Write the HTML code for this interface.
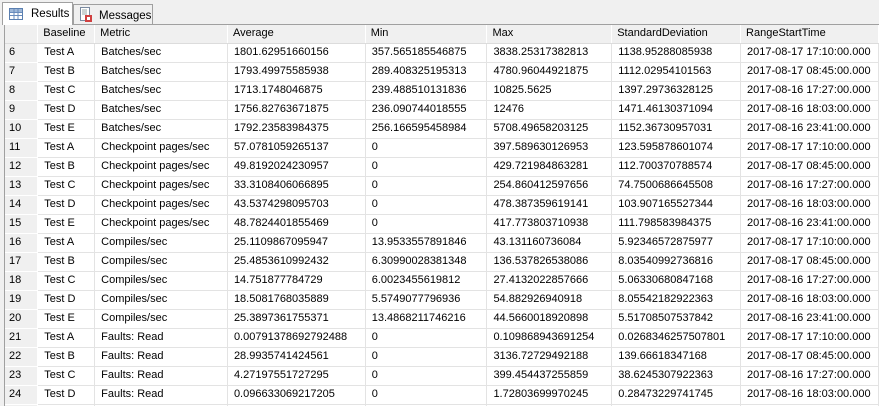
<!DOCTYPE html>
<html style="width:879px;height:406px;overflow:hidden"><head><meta charset="utf-8"><style>
*{margin:0;padding:0;box-sizing:border-box}
body{width:879px;height:406px;overflow:hidden;background:#f0f0f0;font-family:"Liberation Sans",sans-serif;font-size:11px;color:#000;position:relative}
.tab{position:absolute;border:1px solid #a0a0a0;border-bottom:none;font-size:11.5px}
#t1{left:2px;top:2px;width:71px;height:23px;background:#fff;z-index:2}
#t2{left:73px;top:4px;width:80px;height:20px;background:#f0f0f0}
.tab span{position:absolute;top:5px}
#grid{position:absolute;left:4px;top:24px;width:875px;height:382px;overflow:hidden;background:#fff;border-left:1px solid #a0a0a0;border-top:1px solid #a0a0a0}
table{border-collapse:collapse;table-layout:fixed;position:absolute;left:0;top:0}
td{height:19px;border-right:1px solid #e3e3e3;border-bottom:1px solid #e3e3e3;padding:0 0 0 6px;white-space:nowrap;overflow:hidden;line-height:17px}
tr.h td{height:18px;background:#f0f0f0;border-right:1px solid #fff;border-bottom:1px solid #dcdcdc;padding-left:5px}
td.n{background:#f0f0f0;border-right:1px solid #fff;border-bottom:1px solid #fff;padding-left:4px}
</style></head><body>
<div class="tab" id="t1">
<svg style="position:absolute;left:6px;top:5px" width="14" height="12"><rect x=".5" y=".5" width="13" height="11" fill="#fff" stroke="#5a7fb0"/><rect x="1" y="1" width="12" height="3" fill="#9fb8d8"/><path d="M1 4.5h12M1 7.5h12M5 1v10M9 1v10" stroke="#6a8cbc"/></svg>
<span style="left:28px">Results</span></div>
<div class="tab" id="t2">
<svg style="position:absolute;left:5px;top:2px" width="14" height="16"><rect x="1.5" y=".5" width="9" height="13" fill="#fff" stroke="#7a8aa0"/><path d="M3 3h5M3 5h5M3 7h5" stroke="#9aa"/><rect x="6" y="8" width="7" height="7" fill="#d04040"/><rect x="8" y="10" width="3" height="3" fill="#fff"/></svg>
<span style="left:25px">Messages</span></div>
<div id="grid"><table>
<colgroup><col style="width:33px"><col style="width:57px"><col style="width:133px"><col style="width:138px"><col style="width:122px"><col style="width:125px"><col style="width:129px"><col style="width:138px"></colgroup>
<tr class="h"><td></td><td>Baseline</td><td>Metric</td><td>Average</td><td>Min</td><td>Max</td><td>StandardDeviation</td><td>RangeStartTime</td></tr>
<tr><td class="n">6</td><td>Test A</td><td>Batches/sec</td><td>1801.62951660156</td><td>357.565185546875</td><td>3838.25317382813</td><td>1138.95288085938</td><td>2017-08-17 17:10:00.000</td></tr>
<tr><td class="n">7</td><td>Test B</td><td>Batches/sec</td><td>1793.49975585938</td><td>289.408325195313</td><td>4780.96044921875</td><td>1112.02954101563</td><td>2017-08-17 08:45:00.000</td></tr>
<tr><td class="n">8</td><td>Test C</td><td>Batches/sec</td><td>1713.1748046875</td><td>239.488510131836</td><td>10825.5625</td><td>1397.29736328125</td><td>2017-08-16 17:27:00.000</td></tr>
<tr><td class="n">9</td><td>Test D</td><td>Batches/sec</td><td>1756.82763671875</td><td>236.090744018555</td><td>12476</td><td>1471.46130371094</td><td>2017-08-16 18:03:00.000</td></tr>
<tr><td class="n">10</td><td>Test E</td><td>Batches/sec</td><td>1792.23583984375</td><td>256.166595458984</td><td>5708.49658203125</td><td>1152.36730957031</td><td>2017-08-16 23:41:00.000</td></tr>
<tr><td class="n">11</td><td>Test A</td><td>Checkpoint pages/sec</td><td>57.0781059265137</td><td>0</td><td>397.589630126953</td><td>123.595878601074</td><td>2017-08-17 17:10:00.000</td></tr>
<tr><td class="n">12</td><td>Test B</td><td>Checkpoint pages/sec</td><td>49.8192024230957</td><td>0</td><td>429.721984863281</td><td>112.700370788574</td><td>2017-08-17 08:45:00.000</td></tr>
<tr><td class="n">13</td><td>Test C</td><td>Checkpoint pages/sec</td><td>33.3108406066895</td><td>0</td><td>254.860412597656</td><td>74.7500686645508</td><td>2017-08-16 17:27:00.000</td></tr>
<tr><td class="n">14</td><td>Test D</td><td>Checkpoint pages/sec</td><td>43.5374298095703</td><td>0</td><td>478.387359619141</td><td>103.907165527344</td><td>2017-08-16 18:03:00.000</td></tr>
<tr><td class="n">15</td><td>Test E</td><td>Checkpoint pages/sec</td><td>48.7824401855469</td><td>0</td><td>417.773803710938</td><td>111.798583984375</td><td>2017-08-16 23:41:00.000</td></tr>
<tr><td class="n">16</td><td>Test A</td><td>Compiles/sec</td><td>25.1109867095947</td><td>13.9533557891846</td><td>43.131160736084</td><td>5.92346572875977</td><td>2017-08-17 17:10:00.000</td></tr>
<tr><td class="n">17</td><td>Test B</td><td>Compiles/sec</td><td>25.4853610992432</td><td>6.30990028381348</td><td>136.537826538086</td><td>8.03540992736816</td><td>2017-08-17 08:45:00.000</td></tr>
<tr><td class="n">18</td><td>Test C</td><td>Compiles/sec</td><td>14.751877784729</td><td>6.0023455619812</td><td>27.4132022857666</td><td>5.06330680847168</td><td>2017-08-16 17:27:00.000</td></tr>
<tr><td class="n">19</td><td>Test D</td><td>Compiles/sec</td><td>18.5081768035889</td><td>5.5749077796936</td><td>54.882926940918</td><td>8.05542182922363</td><td>2017-08-16 18:03:00.000</td></tr>
<tr><td class="n">20</td><td>Test E</td><td>Compiles/sec</td><td>25.3897361755371</td><td>13.4868211746216</td><td>44.5660018920898</td><td>5.51708507537842</td><td>2017-08-16 23:41:00.000</td></tr>
<tr><td class="n">21</td><td>Test A</td><td>Faults: Read</td><td>0.00791378692792488</td><td>0</td><td>0.109868943691254</td><td>0.0268346257507801</td><td>2017-08-17 17:10:00.000</td></tr>
<tr><td class="n">22</td><td>Test B</td><td>Faults: Read</td><td>28.9935741424561</td><td>0</td><td>3136.72729492188</td><td>139.66618347168</td><td>2017-08-17 08:45:00.000</td></tr>
<tr><td class="n">23</td><td>Test C</td><td>Faults: Read</td><td>4.27197551727295</td><td>0</td><td>399.454437255859</td><td>38.6245307922363</td><td>2017-08-16 17:27:00.000</td></tr>
<tr><td class="n">24</td><td>Test D</td><td>Faults: Read</td><td>0.096633069217205</td><td>0</td><td>1.72803699970245</td><td>0.28473229741745</td><td>2017-08-16 18:03:00.000</td></tr>
<tr><td class="n"></td><td></td><td></td><td></td><td></td><td></td><td></td><td></td></tr>
</table></div>
</body></html>
